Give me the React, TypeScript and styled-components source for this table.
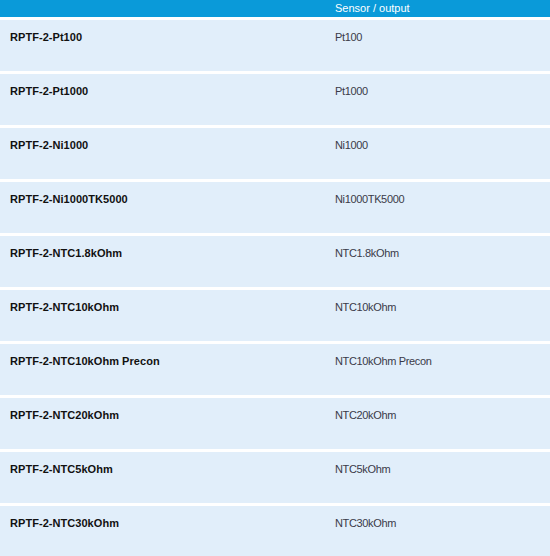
import React from "react";
import styled, { createGlobalStyle } from "styled-components";

const GlobalStyle = createGlobalStyle`
  html, body { margin: 0; padding: 0; background: #ffffff; }
  body { font-family: "Liberation Sans", Arial, sans-serif; }
`;

const Table = styled.div`
  display: flex;
  flex-direction: column;
  gap: 3px;
  width: 550px;
  background: #ffffff;
`;

const HeaderRow = styled.div`
  display: grid;
  grid-template-columns: 335px 1fr;
  height: 17px;
  align-items: center;
  background: #0a9ad9;
  color: #ffffff;
  font-size: 11px;
`;

const HeaderCell = styled.div`
  padding-left: 0;
  line-height: 17px;
`;

const Row = styled.div`
  display: grid;
  grid-template-columns: 335px 1fr;
  height: 51px;
  background: #e1eefa;
  align-items: start;
`;

const Cell = styled.div<{ $bold?: boolean }>`
  padding-top: 10px;
  padding-left: ${(p) => (p.$bold ? "10px" : "0")};
  font-size: 11px;
  line-height: 14px;
  font-weight: ${(p) => (p.$bold ? 700 : 400)};
  letter-spacing: ${(p) => (p.$bold ? "0.05px" : "-0.35px")};
  color: ${(p) => (p.$bold ? "#111111" : "#3a3a48")};
`;

const rows: [string, string][] = [
  ["RPTF-2-Pt100", "Pt100"],
  ["RPTF-2-Pt1000", "Pt1000"],
  ["RPTF-2-Ni1000", "Ni1000"],
  ["RPTF-2-Ni1000TK5000", "Ni1000TK5000"],
  ["RPTF-2-NTC1.8kOhm", "NTC1.8kOhm"],
  ["RPTF-2-NTC10kOhm", "NTC10kOhm"],
  ["RPTF-2-NTC10kOhm Precon", "NTC10kOhm Precon"],
  ["RPTF-2-NTC20kOhm", "NTC20kOhm"],
  ["RPTF-2-NTC5kOhm", "NTC5kOhm"],
  ["RPTF-2-NTC30kOhm", "NTC30kOhm"],
];

export default function App() {
  return (
    <>
      <GlobalStyle />
      <Table>
        <HeaderRow>
          <HeaderCell />
          <HeaderCell>Sensor / output</HeaderCell>
        </HeaderRow>
        {rows.map(([a, b]) => (
          <Row key={a}>
            <Cell $bold>{a}</Cell>
            <Cell>{b}</Cell>
          </Row>
        ))}
      </Table>
    </>
  );
}
